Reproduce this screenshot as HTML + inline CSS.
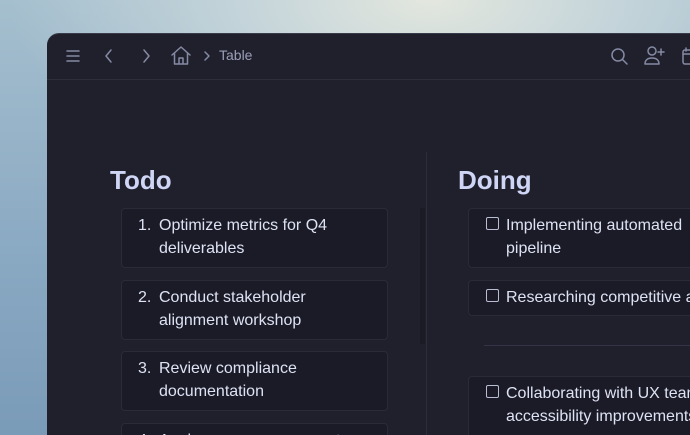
<!DOCTYPE html>
<html><head><style>
*{margin:0;padding:0;box-sizing:border-box}
html,body{width:690px;height:435px;overflow:hidden}
body{position:relative;font-family:"Liberation Sans",sans-serif;
background:radial-gradient(ellipse 420px 200px at 430px 0px,#e3e7de 0%,#c4d4da 45%,rgba(160,185,205,0) 100%),linear-gradient(180deg,#a5bfce 0%,#89a8c2 60%,#7a9bb8 100%);}
.win{position:absolute;left:47px;top:33px;width:643px;height:402px;background:#20202d;border-radius:12px 0 0 0;border-top:1px solid #3a3b4a;overflow:hidden}
.bar{position:absolute;left:0;top:0;right:0;height:46px;border-bottom:1px solid #2d2e3c}
.ic{position:absolute;stroke:#858aa4;fill:none;stroke-width:1.5;stroke-linecap:round;stroke-linejoin:round}
.title{position:absolute;left:172px;top:13px;font-size:14px;color:#9a9fb8}
.vdiv{position:absolute;left:379px;top:118px;width:1px;height:320px;background:#2c2d3b}
.strip{position:absolute;left:373px;top:174px;width:5px;height:136px;background:#1b1b26}
h2{position:absolute;font-size:26px;font-weight:bold;color:#cfd5f5}
.card{position:absolute;background:#1b1b27;border:1px solid #2a2b39;border-radius:4px;color:#dde2f4;font-size:16px;line-height:23px}
.num{position:absolute;left:16px;top:5px}
.txt{position:absolute;left:37px;top:5px;white-space:nowrap}
.cb{position:absolute;left:17px;top:8px;width:13px;height:13px;border:1.5px solid #b9bed4;border-radius:2px}
.hline{position:absolute;left:437px;top:311px;width:300px;height:1px;background:#33344a}
</style></head><body>
<div class="win">
 <div class="bar">
  <svg class="ic" style="left:18px;top:14px" width="16" height="16" viewBox="0 0 16 16"><path d="M2 3h12M2 8h12M2 13h12"/></svg>
  <svg class="ic" style="left:56px;top:14px" width="12" height="16" viewBox="0 0 12 16"><path d="M8 2L3 8l5 6"/></svg>
  <svg class="ic" style="left:93px;top:14px" width="12" height="16" viewBox="0 0 12 16"><path d="M4 2l5 6-5 6"/></svg>
  <svg class="ic" style="left:123px;top:11px" width="22" height="22" viewBox="0 0 22 22"><path d="M2 10L11 2l9 8M4.5 8v11h13V8M9 19v-6h4v6"/></svg>
  <svg class="ic" style="left:156px;top:16px" width="8" height="12" viewBox="0 0 8 12"><path d="M2 2l4 4-4 4"/></svg>
  <div class="title">Table</div>
  <svg class="ic" style="left:563px;top:13px" width="20" height="20" viewBox="0 0 20 20"><circle cx="8" cy="8" r="6"/><path d="M12.5 12.5L17 17"/></svg>
  <svg class="ic" style="left:597px;top:11px" width="22" height="22" viewBox="0 0 22 22"><circle cx="8" cy="6" r="4"/><path d="M1 19c0-4 3-6 7-6s7 2 7 6zM17 4v6M14 7h6"/></svg>
  <svg class="ic" style="left:634px;top:12px" width="14" height="20" viewBox="0 0 14 20"><rect x="2" y="4" width="14" height="14" rx="2"/><path d="M5 2v3M2 8h14"/></svg>
 </div>
 <div class="strip"></div>
 <div class="vdiv"></div>
 <h2 style="left:63px;top:131px">Todo</h2>
 <h2 style="left:411px;top:131px">Doing</h2>
 <div class="card" style="left:74px;top:174px;width:267px;height:60px"><span class="num">1.</span><span class="txt">Optimize metrics for Q4<br>deliverables</span></div>
 <div class="card" style="left:74px;top:246px;width:267px;height:60px"><span class="num">2.</span><span class="txt">Conduct stakeholder<br>alignment workshop</span></div>
 <div class="card" style="left:74px;top:317px;width:267px;height:60px"><span class="num">3.</span><span class="txt">Review compliance<br>documentation</span></div>
 <div class="card" style="left:74px;top:389px;width:267px;height:60px"><span class="num">4.</span><span class="txt">Analyze resource requests</span></div>
 <div class="card" style="left:421px;top:174px;width:300px;height:60px"><span class="cb"></span><span class="txt">Implementing automated<br>pipeline</span></div>
 <div class="card" style="left:421px;top:246px;width:300px;height:36px"><span class="cb"></span><span class="txt">Researching competitive analysis</span></div>
 <div class="hline"></div>
 <div class="card" style="left:421px;top:342px;width:300px;height:70px"><span class="cb"></span><span class="txt">Collaborating with UX team<br>accessibility improvements</span></div>
</div>
</body></html>
